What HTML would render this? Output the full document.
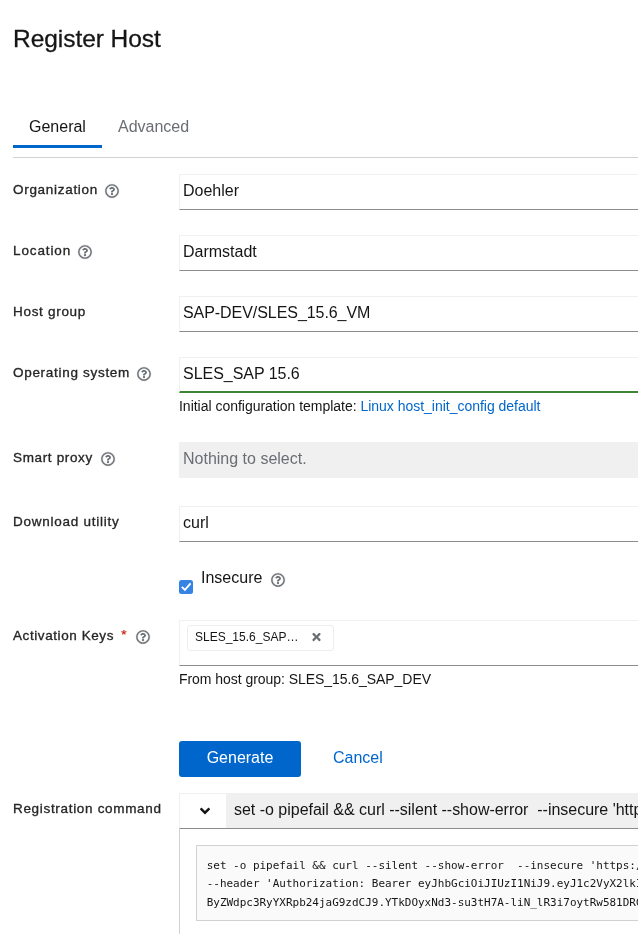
<!DOCTYPE html>
<html lang="en">
<head>
<meta charset="utf-8">
<title>Register Host</title>
<style>
*{box-sizing:border-box;margin:0;padding:0}
html,body{width:638px;height:934px;overflow:hidden;background:#fff}
body{position:relative;font-family:"Liberation Sans",sans-serif;color:#151515;font-size:16px;line-height:24px}
#wrap{position:absolute;left:0;top:0;width:638px;height:934px;overflow:hidden;will-change:transform}
.abs{position:absolute;white-space:nowrap}
h1{position:absolute;left:13px;top:21px;font-size:24.5px;line-height:36px;font-weight:400;color:#151515;-webkit-text-stroke:.3px #151515;white-space:nowrap;letter-spacing:-.05px}
.tab{position:absolute;top:115px;font-size:16px;line-height:24px;white-space:nowrap}
.tabline{position:absolute;left:13px;top:157px;width:625px;height:1px;background:#d2d2d2}
.tabcur{position:absolute;left:13px;top:145px;width:89px;height:3px;background:#06c}
.lbl{position:absolute;left:13px;font-size:13.5px;line-height:21px;font-weight:400;color:#262626;-webkit-text-stroke:.33px #262626;white-space:nowrap}
.ico{position:absolute;width:14px;height:14px;display:block;overflow:visible}
.inp{position:absolute;left:179px;width:470px;height:36px;border:1px solid #f0f0f0;border-bottom:1px solid #8a8d90;background:#fff;padding:0 3px;font-size:16px;line-height:32px;white-space:nowrap;overflow:hidden}
.inp.ok{border-bottom:2px solid #3e8635}
.inp.dis{background:#f0f0f0;border-color:#f0f0f0;color:#6a6e73}
.hint{position:absolute;left:179px;font-size:14px;line-height:21px;white-space:nowrap}
a{color:#06c;text-decoration:none}
.btn{position:absolute;left:179px;top:741px;width:122px;height:36px;border-radius:3px;background:#06c;color:#fff;text-align:center;line-height:34px;font-size:16px}
.chk{position:absolute;left:179px;top:580px;width:14px;height:14px;border-radius:2.5px;background:#3584e4}
.chip{position:absolute;left:187px;top:625px;width:147px;height:26px;border:1px solid #ededed;border-radius:3px;background:#fff;font-size:12px;line-height:18px}
.code{position:absolute;left:196px;top:845px;width:460px;height:76px;border:1px solid #d2d2d2;background:#fafafa;overflow:hidden}
.code pre{position:absolute;left:9.7px;top:10.5px;font-family:"DejaVu Sans Mono","Liberation Mono",monospace;font-size:10.98px;line-height:18.57px;color:#151515;white-space:pre}
</style>
</head>
<body>
<div id="wrap">
<h1>Register Host</h1>

<div class="tab" style="left:29px;color:#151515">General</div>
<div class="tab" style="left:118px;color:#6a6e73">Advanced</div>
<div class="tabline"></div>
<div class="tabcur"></div>

<div class="lbl" style="top:179px;letter-spacing:0.7px">Organization</div>
<svg class="ico" style="left:104.9px;top:183.9px" viewBox="0 0 512 512"><path fill="#6a6e73" stroke="#6a6e73" stroke-width="10" d="M256 8C119.043 8 8 119.083 8 256c0 136.997 111.043 248 248 248s248-111.003 248-248C504 119.083 392.957 8 256 8zm0 448c-110.532 0-200-89.431-200-200 0-110.495 89.472-200 200-200 110.491 0 200 89.471 200 200 0 110.53-89.431 200-200 200z"/><path fill="#6a6e73" d="M363.244 200.8c0 67.052-72.421 68.084-72.421 92.863V300c0 6.627-5.373 12-12 12h-45.647c-6.627 0-12-5.373-12-12v-8.659c0-35.745 27.1-50.034 47.579-61.516 17.561-9.845 28.324-16.541 28.324-29.579 0-17.246-21.999-28.693-39.784-28.693-23.189 0-33.894 10.977-48.942 29.969-4.057 5.12-11.46 6.071-16.666 2.124l-27.824-21.098c-5.107-3.872-6.251-11.066-2.644-16.363C184.846 131.491 214.94 112 261.794 112c49.071 0 101.45 38.304 101.45 88.8zM298 368c0 23.159-18.841 42-42 42s-42-18.841-42-42 18.841-42 42-42 42 18.841 42 42z"/></svg>
<div class="inp" style="top:174px">Doehler</div>

<div class="lbl" style="top:240px;letter-spacing:0.88px">Location</div>
<svg class="ico" style="left:78.0px;top:245.0px" viewBox="0 0 512 512"><path fill="#6a6e73" stroke="#6a6e73" stroke-width="10" d="M256 8C119.043 8 8 119.083 8 256c0 136.997 111.043 248 248 248s248-111.003 248-248C504 119.083 392.957 8 256 8zm0 448c-110.532 0-200-89.431-200-200 0-110.495 89.472-200 200-200 110.491 0 200 89.471 200 200 0 110.53-89.431 200-200 200z"/><path fill="#6a6e73" d="M363.244 200.8c0 67.052-72.421 68.084-72.421 92.863V300c0 6.627-5.373 12-12 12h-45.647c-6.627 0-12-5.373-12-12v-8.659c0-35.745 27.1-50.034 47.579-61.516 17.561-9.845 28.324-16.541 28.324-29.579 0-17.246-21.999-28.693-39.784-28.693-23.189 0-33.894 10.977-48.942 29.969-4.057 5.12-11.46 6.071-16.666 2.124l-27.824-21.098c-5.107-3.872-6.251-11.066-2.644-16.363C184.846 131.491 214.94 112 261.794 112c49.071 0 101.45 38.304 101.45 88.8zM298 368c0 23.159-18.841 42-42 42s-42-18.841-42-42 18.841-42 42-42 42 18.841 42 42z"/></svg>
<div class="inp" style="top:235px">Darmstadt</div>

<div class="lbl" style="top:301px;letter-spacing:0.7px">Host group</div>
<div class="inp" style="top:296px;letter-spacing:-.06px">SAP-DEV/SLES_15.6_VM</div>

<div class="lbl" style="top:362px;letter-spacing:0.7px">Operating system</div>
<svg class="ico" style="left:137.0px;top:367.0px" viewBox="0 0 512 512"><path fill="#6a6e73" stroke="#6a6e73" stroke-width="10" d="M256 8C119.043 8 8 119.083 8 256c0 136.997 111.043 248 248 248s248-111.003 248-248C504 119.083 392.957 8 256 8zm0 448c-110.532 0-200-89.431-200-200 0-110.495 89.472-200 200-200 110.491 0 200 89.471 200 200 0 110.53-89.431 200-200 200z"/><path fill="#6a6e73" d="M363.244 200.8c0 67.052-72.421 68.084-72.421 92.863V300c0 6.627-5.373 12-12 12h-45.647c-6.627 0-12-5.373-12-12v-8.659c0-35.745 27.1-50.034 47.579-61.516 17.561-9.845 28.324-16.541 28.324-29.579 0-17.246-21.999-28.693-39.784-28.693-23.189 0-33.894 10.977-48.942 29.969-4.057 5.12-11.46 6.071-16.666 2.124l-27.824-21.098c-5.107-3.872-6.251-11.066-2.644-16.363C184.846 131.491 214.94 112 261.794 112c49.071 0 101.45 38.304 101.45 88.8zM298 368c0 23.159-18.841 42-42 42s-42-18.841-42-42 18.841-42 42-42 42 18.841 42 42z"/></svg>
<div class="inp ok" style="top:357px;letter-spacing:-.03px">SLES_SAP 15.6</div>
<div class="hint" style="top:396px;letter-spacing:-.02px">Initial configuration template: <a>Linux host_init_config default</a></div>

<div class="lbl" style="top:447px;letter-spacing:0.65px">Smart proxy</div>
<svg class="ico" style="left:100.9px;top:451.9px" viewBox="0 0 512 512"><path fill="#6a6e73" stroke="#6a6e73" stroke-width="10" d="M256 8C119.043 8 8 119.083 8 256c0 136.997 111.043 248 248 248s248-111.003 248-248C504 119.083 392.957 8 256 8zm0 448c-110.532 0-200-89.431-200-200 0-110.495 89.472-200 200-200 110.491 0 200 89.471 200 200 0 110.53-89.431 200-200 200z"/><path fill="#6a6e73" d="M363.244 200.8c0 67.052-72.421 68.084-72.421 92.863V300c0 6.627-5.373 12-12 12h-45.647c-6.627 0-12-5.373-12-12v-8.659c0-35.745 27.1-50.034 47.579-61.516 17.561-9.845 28.324-16.541 28.324-29.579 0-17.246-21.999-28.693-39.784-28.693-23.189 0-33.894 10.977-48.942 29.969-4.057 5.12-11.46 6.071-16.666 2.124l-27.824-21.098c-5.107-3.872-6.251-11.066-2.644-16.363C184.846 131.491 214.94 112 261.794 112c49.071 0 101.45 38.304 101.45 88.8zM298 368c0 23.159-18.841 42-42 42s-42-18.841-42-42 18.841-42 42-42 42 18.841 42 42z"/></svg>
<div class="inp dis" style="top:442px">Nothing to select.</div>

<div class="lbl" style="top:511px;letter-spacing:0.75px">Download utility</div>
<div class="inp" style="top:506px">curl</div>

<div class="chk"><svg width="14" height="14" viewBox="0 0 14 14" style="display:block"><path d="M2.85 6.9 L5.9 9.95 L11.6 3.35" fill="none" stroke="#fff" stroke-width="1.9" stroke-linecap="butt" stroke-linejoin="miter"/></svg></div>
<div class="abs" style="left:201px;top:566px;font-size:16px">Insecure</div>
<svg class="ico" style="left:271.0px;top:572.7px" viewBox="0 0 512 512"><path fill="#6a6e73" stroke="#6a6e73" stroke-width="10" d="M256 8C119.043 8 8 119.083 8 256c0 136.997 111.043 248 248 248s248-111.003 248-248C504 119.083 392.957 8 256 8zm0 448c-110.532 0-200-89.431-200-200 0-110.495 89.472-200 200-200 110.491 0 200 89.471 200 200 0 110.53-89.431 200-200 200z"/><path fill="#6a6e73" d="M363.244 200.8c0 67.052-72.421 68.084-72.421 92.863V300c0 6.627-5.373 12-12 12h-45.647c-6.627 0-12-5.373-12-12v-8.659c0-35.745 27.1-50.034 47.579-61.516 17.561-9.845 28.324-16.541 28.324-29.579 0-17.246-21.999-28.693-39.784-28.693-23.189 0-33.894 10.977-48.942 29.969-4.057 5.12-11.46 6.071-16.666 2.124l-27.824-21.098c-5.107-3.872-6.251-11.066-2.644-16.363C184.846 131.491 214.94 112 261.794 112c49.071 0 101.45 38.304 101.45 88.8zM298 368c0 23.159-18.841 42-42 42s-42-18.841-42-42 18.841-42 42-42 42 18.841 42 42z"/></svg>

<div class="lbl" style="top:625px;letter-spacing:0.58px">Activation Keys <span style="color:#c9190b;-webkit-text-stroke:.2px #c9190b;margin-left:3px;position:relative;top:-1px">*</span></div>
<svg class="ico" style="left:135.9px;top:630.2px" viewBox="0 0 512 512"><path fill="#6a6e73" stroke="#6a6e73" stroke-width="10" d="M256 8C119.043 8 8 119.083 8 256c0 136.997 111.043 248 248 248s248-111.003 248-248C504 119.083 392.957 8 256 8zm0 448c-110.532 0-200-89.431-200-200 0-110.495 89.472-200 200-200 110.491 0 200 89.471 200 200 0 110.53-89.431 200-200 200z"/><path fill="#6a6e73" d="M363.244 200.8c0 67.052-72.421 68.084-72.421 92.863V300c0 6.627-5.373 12-12 12h-45.647c-6.627 0-12-5.373-12-12v-8.659c0-35.745 27.1-50.034 47.579-61.516 17.561-9.845 28.324-16.541 28.324-29.579 0-17.246-21.999-28.693-39.784-28.693-23.189 0-33.894 10.977-48.942 29.969-4.057 5.12-11.46 6.071-16.666 2.124l-27.824-21.098c-5.107-3.872-6.251-11.066-2.644-16.363C184.846 131.491 214.94 112 261.794 112c49.071 0 101.45 38.304 101.45 88.8zM298 368c0 23.159-18.841 42-42 42s-42-18.841-42-42 18.841-42 42-42 42 18.841 42 42z"/></svg>
<div class="inp" style="top:620px;height:46px"></div>
<div class="chip"><span class="abs" style="left:7px;top:2px">SLES_15.6_SAP…</span>
<svg class="abs" style="left:123.5px;top:4.7px" width="9" height="12" viewBox="0 0 352 512"><path fill="#6a6e73" d="M242.72 256l100.07-100.07c12.28-12.28 12.28-32.19 0-44.48l-22.24-22.24c-12.28-12.28-32.19-12.28-44.48 0L176 189.28 75.93 89.21c-12.28-12.28-32.19-12.28-44.48 0L9.21 111.45c-12.28 12.28-12.28 32.19 0 44.48L109.28 256 9.21 356.07c-12.28 12.28-12.28 32.19 0 44.48l22.24 22.24c12.28 12.28 32.2 12.28 44.48 0L176 322.72l100.07 100.07c12.28 12.28 32.2 12.28 44.48 0l22.24-22.24c12.28-12.28 12.28-32.19 0-44.48L242.72 256z"/></svg></div>
<div class="hint" style="top:669px;letter-spacing:-.05px">From host group: SLES_15.6_SAP_DEV</div>

<div class="btn">Generate</div>
<div class="abs" style="left:333px;top:746px;color:#06c">Cancel</div>

<div class="lbl" style="top:798px;letter-spacing:0.68px">Registration command</div>

<!-- registration command box -->
<div class="abs" style="left:179px;top:793px;width:470px;height:36px;border:1px solid #f0f0f0;border-bottom:1px solid #8a8d90;background:#fff"></div>
<div class="abs" style="left:226px;top:794px;width:420px;height:34px;background:#f0f0f0;font-size:16px;line-height:32px;padding-left:8px;white-space:pre;overflow:hidden;letter-spacing:-.017px">set -o pipefail &amp;&amp; curl --silent --show-error  --insecure 'https:/</div>
<svg class="abs" style="left:200px;top:803px" width="10" height="16" viewBox="0 0 320 512"><path fill="#151515" d="M143 352.3L7 216.3c-9.4-9.4-9.4-24.6 0-33.9l22.6-22.6c9.4-9.4 24.6-9.4 33.9 0l96.4 96.4 96.4-96.4c9.4-9.4 24.6-9.4 33.9 0l22.6 22.6c9.4 9.4 9.4 24.6 0 33.9l-136 136c-9.2 9.4-24.4 9.4-33.8 0z"/></svg>
<div class="abs" style="left:179px;top:829px;width:470px;height:120px;border:1px solid #d2d2d2;border-top:0"></div>
<div class="code"><pre>set -o pipefail &amp;&amp; curl --silent --show-error  --insecure 'https:/
--header 'Authorization: Bearer eyJhbGciOiJIUzI1NiJ9.eyJ1c2VyX2lkIjo0LCJpYXQiOjE3MTc
ByZWdpc3RyYXRpb24jaG9zdCJ9.YTkDOyxNd3-su3tH7A-liN_lR3i7oytRw581DRGx2kQ' \</pre></div>
</div>
</body>
</html>
